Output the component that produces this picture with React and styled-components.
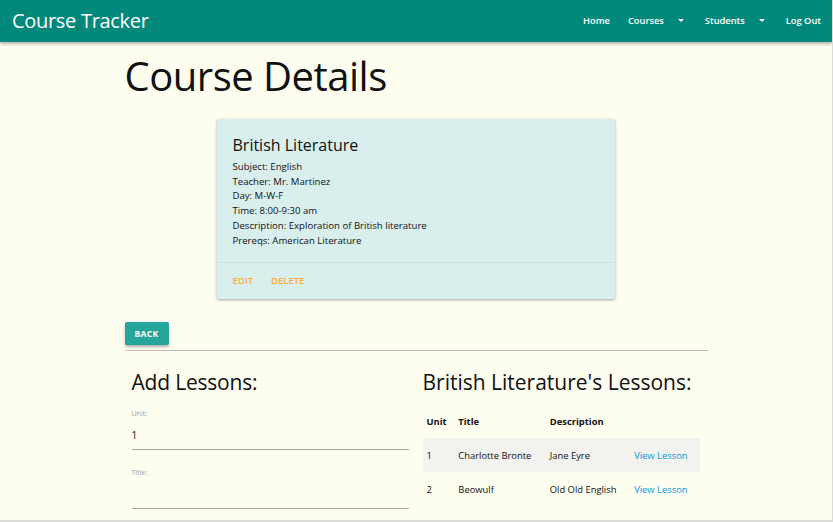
import React from "react";
import styled, { createGlobalStyle } from "styled-components";

const Global = createGlobalStyle`
  html, body { margin: 0; padding: 0; }
  body {
    background: #fdfdf0;
    font-family: "Open Sans", "DejaVu Sans", sans-serif;
    color: #111;
  }
  * { box-sizing: border-box; }
`;

const Page = styled.div`
  width: 833px;
  height: 522px;
  overflow: hidden;
  background: #fdfdf0;
  border-right: 1px solid #dcdcd6;
  border-bottom: 2px solid #dcdcd6;
`;

const Nav = styled.nav`
  height: 42px;
  background: #00897b;
  display: flex;
  align-items: center;
  justify-content: space-between;
  padding: 0 11px 1px 12px;
  box-shadow: 0 2px 3px rgba(0, 0, 0, 0.28);
  position: relative;
`;

const Brand = styled.div`
  color: #fff;
  font-size: 20px;
  letter-spacing: -0.3px;
`;

const NavLinks = styled.ul`
  display: flex;
  list-style: none;
  margin: 0;
  padding: 0;
`;

const NavItem = styled.li`
  color: #fff;
  font-size: 9.3px;
  font-weight: 600;
  display: flex;
  align-items: center;
  margin-left: ${(p) => p.$ml || 0}px;
`;

const Caret = styled.span`
  display: inline-block;
  margin-left: 14px;
  width: 0;
  height: 0;
  border-left: 3px solid transparent;
  border-right: 3px solid transparent;
  border-top: 3px solid #fff;
`;

const Container = styled.main`
  width: 583px;
  margin: 0 auto;
`;

const Title = styled.h1`
  font-size: 40px;
  font-weight: 400;
  margin: 9px 0 0;
  line-height: 50px;
  letter-spacing: -0.5px;
`;

const Card = styled.section`
  width: 398px;
  margin: 18px 0 0 92px;
  background: #d9efee;
  box-shadow: 0 1px 3px rgba(0, 0, 0, 0.35);
  border-radius: 2px;
`;

const CardContent = styled.div`
  padding: 16px 16px 14px;
`;

const CardTitle = styled.div`
  font-size: 16px;
  line-height: 20px;
  margin-bottom: 5px;
`;

const CardLine = styled.div`
  font-size: 9.6px;
  line-height: 14.7px;
`;

const CardActions = styled.div`
  border-top: 1px solid rgba(160, 160, 160, 0.2);
  padding: 11px 16px 12px;
  display: flex;
  gap: 18px;
`;

const ActionLink = styled.span`
  color: #ffab40;
  font-size: 9.5px;
  font-weight: 600;
  text-transform: uppercase;
`;

const BackButton = styled.button`
  margin-top: 23px;
  background: #26a69a;
  color: #fff;
  border: none;
  border-radius: 2px;
  height: 23px;
  width: 44px;
  font-family: inherit;
  font-size: 8.5px;
  font-weight: 700;
  letter-spacing: 0.3px;
  box-shadow: 0 2px 3px rgba(0, 0, 0, 0.3);
  padding: 0;
`;

const Divider = styled.hr`
  margin: 5px 0 0;
  border: none;
  border-top: 1px solid #bdbdb6;
`;

const Row = styled.div`
  display: grid;
  grid-template-columns: 291px 292px;
`;

const Col = styled.div`
  padding: 0 7px;
`;

const SectionTitle = styled.h2`
  font-size: 21px;
  font-weight: 400;
  margin: 17px 0 0;
  line-height: 28px;
  letter-spacing: ${(p) => p.$ls || "-0.2px"};
`;

const Field = styled.div`
  margin-top: ${(p) => p.$top}px;
`;

const Label = styled.div`
  font-size: 7px;
  color: #9e9e9e;
  line-height: 10px;
`;

const InputLine = styled.div`
  height: 31px;
  border-bottom: 1px solid #a8a8a4;
  padding-top: 9px;
  font-size: 10px;
  line-height: 14px;
  width: 277px;
`;

const Table = styled.table`
  margin-top: 8px;
  width: 277px;
  border-collapse: collapse;
  font-size: 9.4px;
`;

const Th = styled.th`
  text-align: left;
  font-weight: 700;
  padding: 0 4px;
  height: 34px;
`;

const Tr = styled.tr`
  background: ${(p) => (p.$striped ? "#f2f2ee" : "transparent")};
`;

const Td = styled.td`
  padding: 0 4px;
  height: 34px;
  color: ${(p) => (p.$link ? "#039be5" : "#111")};
`;

const lessons = [
  { unit: 1, title: "Charlotte Bronte", desc: "Jane Eyre" },
  { unit: 2, title: "Beowulf", desc: "Old Old English" },
];

export default function App() {
  return (
    <Page>
      <Global />
      <Nav>
        <Brand>Course Tracker</Brand>
        <NavLinks>
          <NavItem>Home</NavItem>
          <NavItem $ml={18}>
            Courses
            <Caret />
          </NavItem>
          <NavItem $ml={21}>
            Students
            <Caret />
          </NavItem>
          <NavItem $ml={21}>Log Out</NavItem>
        </NavLinks>
      </Nav>
      <Container>
        <Title>Course Details</Title>
        <Card>
          <CardContent>
            <CardTitle>British Literature</CardTitle>
            <CardLine>Subject: English</CardLine>
            <CardLine>Teacher: Mr. Martinez</CardLine>
            <CardLine>Day: M-W-F</CardLine>
            <CardLine>Time: 8:00-9:30 am</CardLine>
            <CardLine>Description: Exploration of British literature</CardLine>
            <CardLine>Prereqs: American Literature</CardLine>
          </CardContent>
          <CardActions>
            <ActionLink>Edit</ActionLink>
            <ActionLink>Delete</ActionLink>
          </CardActions>
        </Card>
        <BackButton>BACK</BackButton>
        <Divider />
        <Row>
          <Col>
            <SectionTitle>Add Lessons:</SectionTitle>
            <Field $top={13}>
              <Label>Unit:</Label>
              <InputLine>1</InputLine>
            </Field>
            <Field $top={18}>
              <Label>Title:</Label>
              <InputLine />
            </Field>
          </Col>
          <Col>
            <SectionTitle $ls="0px">British Literature's Lessons:</SectionTitle>
            <Table>
              <thead>
                <tr>
                  <Th>Unit</Th>
                  <Th>Title</Th>
                  <Th>Description</Th>
                  <Th />
                </tr>
              </thead>
              <tbody>
                {lessons.map((l, i) => (
                  <Tr key={l.unit} $striped={i === 0}>
                    <Td>{l.unit}</Td>
                    <Td>{l.title}</Td>
                    <Td>{l.desc}</Td>
                    <Td $link>View Lesson</Td>
                  </Tr>
                ))}
              </tbody>
            </Table>
          </Col>
        </Row>
      </Container>
    </Page>
  );
}
